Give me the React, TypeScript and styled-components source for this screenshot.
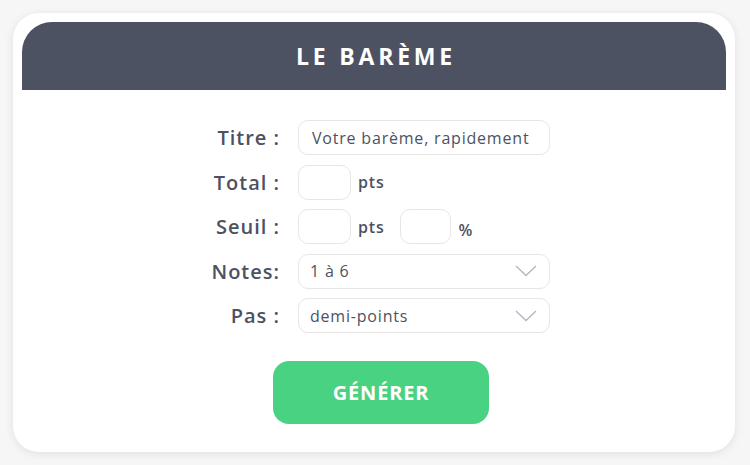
import React, { useState } from 'react'
import styled, { createGlobalStyle } from 'styled-components'

const GlobalStyle = createGlobalStyle`
  html, body {
    margin: 0;
    padding: 0;
    background: #f6f6f6;
  }
  body {
    font-family: "Open Sans", "Liberation Sans", sans-serif;
    color: #4c5262;
  }
`

const Page = styled.div`
  padding: 13px 15px 14px 13px;
`

const Card = styled.div`
  background: #fff;
  border-radius: 26px;
  padding: 9px 9px 28px 9px;
  box-shadow: 0 2px 10px rgba(0, 0, 0, 0.09);
`

const Header = styled.div`
  height: 68px;
  background: #4c5262;
  border-radius: 30px 30px 0 0;
  display: flex;
  align-items: center;
  justify-content: center;
`

const Title = styled.h1`
  margin: 0;
  color: #fff;
  font-size: 23px;
  font-weight: 700;
  letter-spacing: 3.8px;
  padding-left: 4px;
`

const Form = styled.div`
  display: grid;
  grid-template-columns: 82px 252px;
  column-gap: 18px;
  row-gap: 9.5px;
  justify-content: center;
  align-items: center;
  margin-top: 30px;
`

const Label = styled.label`
  text-align: right;
  font-size: 20px;
  font-weight: 600;
  letter-spacing: 1px;
  color: #4c5262;
  white-space: nowrap;
`

const Field = styled.div`
  display: flex;
  align-items: center;
  height: 35px;
`

const TextInput = styled.input<{ $width?: number }>`
  box-sizing: border-box;
  width: ${({ $width }) => ($width ? `${$width}px` : '100%')};
  height: 35px;
  border: 1px solid #e6e6e6;
  border-radius: 10px;
  padding: 0 13px;
  font-family: inherit;
  font-size: 16px;
  font-weight: 500;
  letter-spacing: 0.8px;
  color: #4c5262;
  outline: none;
  background: #fff;
`

const Unit = styled.span<{ $low?: boolean }>`
  font-size: 16px;
  font-weight: 600;
  letter-spacing: 0.8px;
  color: #4c5262;
  margin-left: 7px;
  margin-right: 16px;
  padding-top: ${({ $low }) => ($low ? '6px' : '0')};
`

const Select = styled.div`
  box-sizing: border-box;
  width: 252px;
  height: 35px;
  border: 1px solid #e6e6e6;
  border-radius: 10px;
  padding: 0 12px 0 11px;
  display: flex;
  align-items: center;
  justify-content: space-between;
  font-size: 16px;
  font-weight: 500;
  letter-spacing: 0.8px;
  color: #4c5262;
`

const Chevron = () => (
  <svg width="22" height="12" viewBox="0 0 22 12" fill="none">
    <path d="M1 1 L11 10.5 L21 1" stroke="#b3b7c6" strokeWidth="1.4" />
  </svg>
)

const Actions = styled.div`
  display: flex;
  justify-content: center;
  margin-top: 28px;
  padding-left: 14px;
`

const Button = styled.button`
  width: 216px;
  height: 63px;
  border: none;
  border-radius: 16px;
  background: #49d281;
  color: #fff;
  font-family: inherit;
  font-size: 20px;
  font-weight: 700;
  letter-spacing: 0.8px;
  cursor: pointer;
`

const App = () => {
  const [titre, setTitre] = useState('Votre barème, rapidement')

  return (
    <Page>
      <GlobalStyle />
      <Card>
        <Header>
          <Title>LE BARÈME</Title>
        </Header>
        <Form>
          <Label>Titre :</Label>
          <Field>
            <TextInput value={titre} onChange={(e) => setTitre(e.target.value)} />
          </Field>

          <Label>Total :</Label>
          <Field>
            <TextInput $width={53} />
            <Unit>pts</Unit>
          </Field>

          <Label>Seuil :</Label>
          <Field>
            <TextInput $width={53} />
            <Unit>pts</Unit>
            <TextInput $width={51} />
            <Unit $low>%</Unit>
          </Field>

          <Label>Notes:</Label>
          <Field>
            <Select>
              <span>1 à 6</span>
              <Chevron />
            </Select>
          </Field>

          <Label>Pas :</Label>
          <Field>
            <Select>
              <span>demi-points</span>
              <Chevron />
            </Select>
          </Field>
        </Form>
        <Actions>
          <Button>GÉNÉRER</Button>
        </Actions>
      </Card>
    </Page>
  )
}

export default App
